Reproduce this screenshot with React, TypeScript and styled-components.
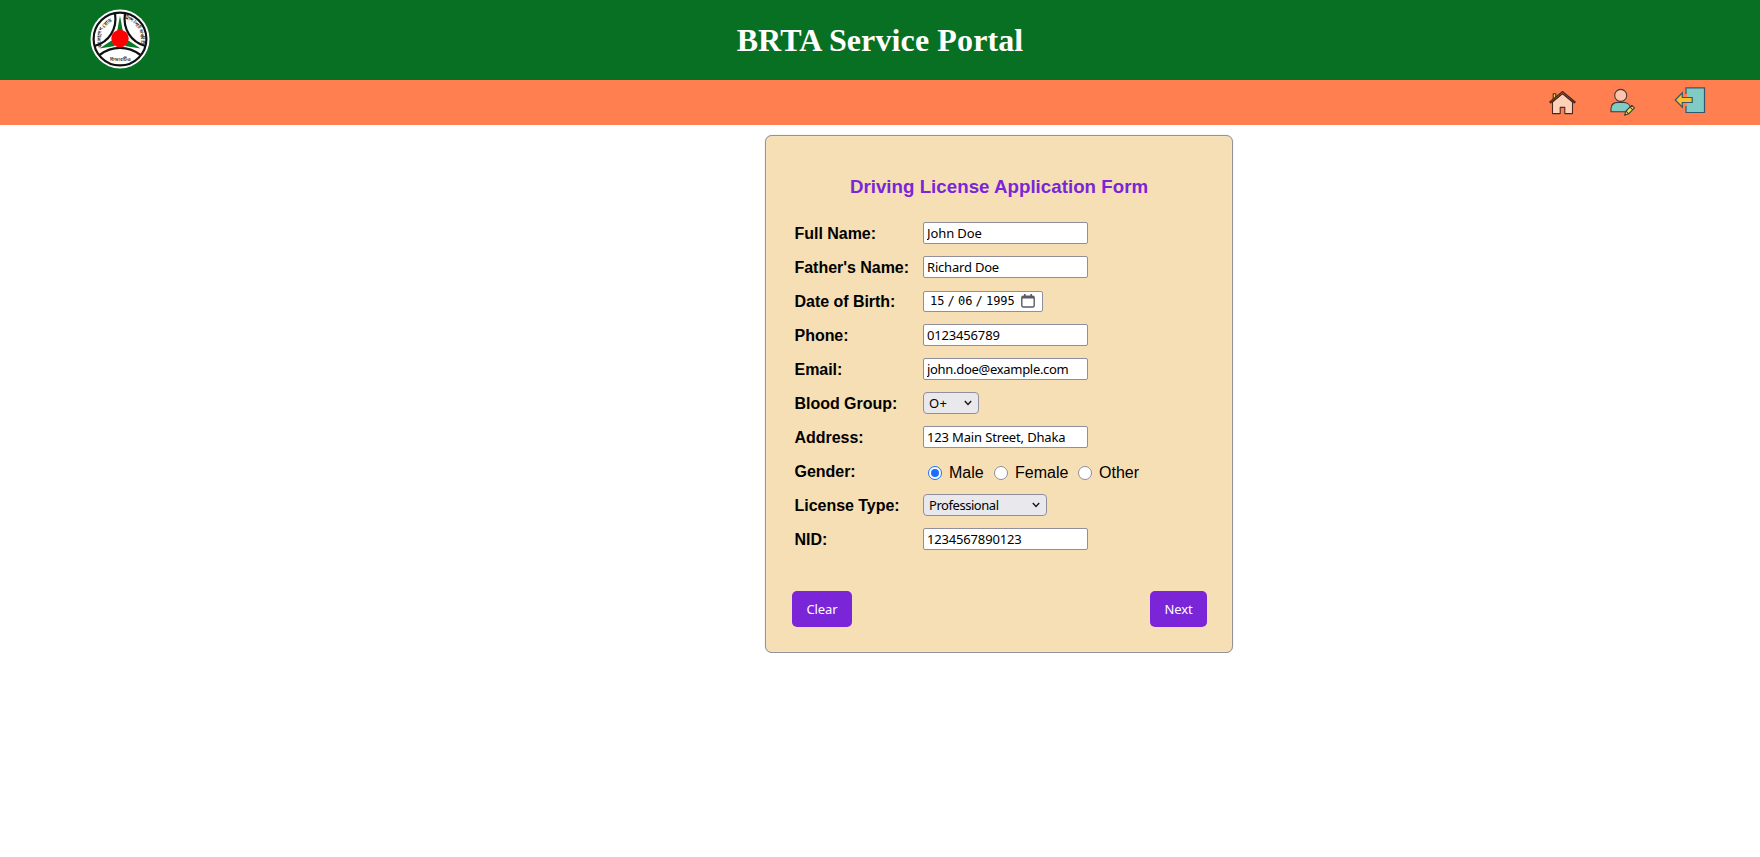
import React from "react";
import styled, { createGlobalStyle } from "styled-components";

const GlobalStyle = createGlobalStyle`
  * { box-sizing: border-box; }
  body { margin: 0; background: #fff; color: #000; font-family: "Liberation Sans", Arial, sans-serif; font-size: 16px; }
`;

const Header = styled.header`
  height: 80px;
  display: grid;
  grid-template-columns: 240px 1fr 240px;
  align-items: center;
  background: #077022;
`;
const LogoLink = styled.a`
  display: flex;
  margin: 0 0 2px 90px;
`;
const PortalTitle = styled.h1`
  margin: 0;
  text-align: center;
  color: #fff;
  font: bold 32px/38px "Liberation Serif", "Times New Roman", serif;
  letter-spacing: 0.12px;
`;
const Nav = styled.nav`
  height: 45px;
  display: flex;
  justify-content: flex-end;
  align-items: flex-start;
  padding: 6px 54px 0 0;
  background: #ff7f50;
`;
const NavLink = styled.a<{ $gap?: number; $top?: number }>`
  display: flex;
  margin-right: ${(p) => p.$gap ?? 0}px;
  padding-top: ${(p) => p.$top ?? 0}px;
`;
const Main = styled.main`
  padding: 10px 0 0 765px;
`;
const Card = styled.form`
  width: 468px;
  height: 518px;
  padding: 40px 25px 0 26px;
  border: 1px solid #929298;
  border-radius: 7px;
  background: #f6dfb5;
  box-shadow: inset 0 0 1px #fff, 0 0 1px #aaa;
`;
const FormTitle = styled.h2`
  margin: 0 1px 19px 0;
  color: #7a25d8;
  font-size: 18.72px;
  line-height: 22px;
  letter-spacing: 0.02px;
  text-align: center;
`;
const Row = styled.div`
  height: 34px;
  display: grid;
  grid-template-columns: 128.5px 1fr;
  align-items: center;
  padding-left: 2.5px;
`;
const Label = styled.label`
  font-weight: bold;
  line-height: 18px;
  letter-spacing: -0.03px;
  white-space: nowrap;
`;
const controlFont = `font-family: "Noto Sans", Tahoma, sans-serif; font-size: 13px;`;
const TextInput = styled.input<{ $spacing: number }>`
  ${controlFont}
  width: 165px;
  height: 22px;
  margin: 0 0 2px;
  padding: 0 3px;
  border: 1px solid #8f8f9d;
  border-radius: 2px;
  background: #fff;
  color: #000;
  letter-spacing: ${(p) => p.$spacing}px;
`;
const DateField = styled.div`
  width: 120px;
  height: 21px;
  display: flex;
  align-items: center;
  margin-bottom: 1px;
  padding: 0 7px 0 6px;
  border: 1px solid #8f8f9d;
  border-radius: 2px;
  background: #fff;
  font: 12px/19px "DejaVu Sans Mono", monospace;
`;
const DatePart = styled.span`
  white-space: nowrap;
`;
const Slash = styled.span`
  width: 13.5px;
  text-align: center;
`;
const CalendarIcon = styled.svg`
  margin-left: auto;
  margin-bottom: 2px;
`;
const SelectBox = styled.div<{ $width: number; $spacing?: number }>`
  ${controlFont}
  width: ${(p) => p.$width}px;
  height: 22px;
  display: flex;
  align-items: center;
  justify-content: space-between;
  margin-bottom: 2px;
  padding: 0 6px 0 5px;
  border: 1px solid #8f8f9d;
  border-radius: 4px;
  background: #e9e9ed;
  line-height: 20px;
  letter-spacing: ${(p) => p.$spacing ?? 0}px;
`;
const RadioGroup = styled.div`
  display: flex;
  align-items: center;
  padding: 2px 0 0 5px;
`;
const RadioLabel = styled.label<{ $width: number }>`
  display: flex;
  align-items: center;
  gap: 7px;
  width: ${(p) => p.$width}px;
  line-height: 18px;
`;
const RadioDot = styled.span<{ $checked?: boolean }>`
  width: 14px;
  height: 14px;
  flex: none;
  display: flex;
  align-items: center;
  justify-content: center;
  border: ${(p) => (p.$checked ? "1.5px solid #1a6dff" : "1px solid #8f8f9d")};
  border-radius: 50%;
  background: #fff;
  &::after {
    content: "";
    width: 8px;
    height: 8px;
    border-radius: 50%;
    background: ${(p) => (p.$checked ? "#1a6dff" : "transparent")};
  }
`;
const Actions = styled.div`
  display: flex;
  justify-content: space-between;
  margin-top: 34px;
`;
const Button = styled.button<{ $width: number }>`
  ${controlFont}
  width: ${(p) => p.$width}px;
  height: 36px;
  padding: 0;
  border: 0;
  border-radius: 5px;
  background: #7a25d8;
  color: #fff;
  letter-spacing: -0.1px;
`;

function Logo() {
  return (
    <svg width="60" height="60" viewBox="0 0 60 60">
      <defs>
        <path id="arcLeft" d="M12.6 38 A19.5 19.5 0 0 1 25 11.2" />
        <path id="arcRight" d="M34.5 9.6 A21 21 0 0 1 49.5 37" />
      </defs>
      <circle cx="30" cy="30" r="29.5" fill="#fff" />
      <circle cx="30" cy="30" r="26.4" fill="#fff" stroke="#111" strokeWidth="2.2" />
      <g fill="none" stroke="#111" strokeWidth="2.2">
        <path d="M25 4.5 C27.5 20 19 33 4.5 37" />
        <path d="M35 4.5 C32.5 20 41 33 55.5 37" />
        <path d="M9.5 46 C22 36.5 38 36.5 50.5 46" />
      </g>
      <g fill="#087a25">
        <path d="M30 6.5 L27.2 22 H32.8 Z" />
        <path d="M9.5 39.5 L21.5 31.5 L25 37 Z" />
        <path d="M50.5 39.5 L38.5 31.5 L35 37 Z" />
      </g>
      <circle cx="30" cy="29.5" r="8.7" fill="#f00" />
      <g fill="#111" fontFamily="Noto Sans, sans-serif" fontWeight="700" fontSize="4.9">
        <text><textPath href="#arcLeft" startOffset="0" textLength="30">বাংলাদেশ রোড</textPath></text>
        <text fontSize="4.6"><textPath href="#arcRight" startOffset="0" textLength="33">ট্রান্সপোর্ট অথরিটি</textPath></text>
        <text x="30" y="51.5" textAnchor="middle">বিআরটিএ</text>
      </g>
    </svg>
  );
}

function HomeIcon() {
  return (
    <svg width="27" height="25" viewBox="0 0 27 25" stroke="#4a2820" strokeWidth="1.1" strokeLinejoin="round">
      <path d="M4.2 9 V2.7 H6.8 V7" fill="#e9d34c" />
      <path d="M3.5 11 L13.5 2.5 L23.5 11 V22.6 H15.8 V16.4 H11.2 V22.6 H3.5 Z" fill="#ffd0b8" />
      <path d="M0.7 11 L13.5 0.5 L26.3 11 L25.4 12 L13.5 2.6 L1.6 12 Z" fill="#e05730" />
    </svg>
  );
}

function UserIcon() {
  return (
    <svg width="26" height="28" viewBox="0 0 26 28" stroke="#403a3a" strokeWidth="1.1" strokeLinejoin="round">
      <circle cx="10.7" cy="7.4" r="6" fill="#ffc4ae" />
      <path d="M1 23.8 V20.5 C1 16.5 4 14.4 8 14.4 H13 C17 14.4 20.3 16.4 20.3 19.9 V23.8 Z" fill="#80cbc4" />
      <path d="M14.6 27.2 L16 23 L21.8 17.4 L24.5 19.9 L18.6 25.8 Z" fill="#e3ea5a" />
      <path d="M20 19.1 L22.7 21.6 M16 23 L18.6 25.8" fill="none" />
    </svg>
  );
}

function ExitIcon() {
  return (
    <svg width="32" height="28" viewBox="0 0 32 28">
      <path d="M12 1.8 H30.5 V26.5 H12 Z" fill="#80cbc4" stroke="#34586b" strokeWidth="1.2" />
      <path d="M11 9.5 H13 M11 18.5 H13" stroke="#ff7f50" strokeWidth="3" />
      <path d="M1.3 14 L8.3 6.8 V11.5 H18.2 V16.5 H8.3 V21.2 Z" fill="#fbc02d" stroke="#34586b" strokeWidth="1.2" />
    </svg>
  );
}

function Chevron() {
  return (
    <svg width="8" height="6" viewBox="0 0 8 6" fill="none" stroke="#15141a" strokeWidth="1.4">
      <path d="M0.8 1 L4 4.4 L7.2 1" />
    </svg>
  );
}

function TextRow(props: { label: string; value: string; spacing: number }) {
  return (
    <Row>
      <Label>{props.label}</Label>
      <TextInput defaultValue={props.value} $spacing={props.spacing} />
    </Row>
  );
}

export default function App() {
  return (
    <>
      <GlobalStyle />
      <Header>
        <LogoLink><Logo /></LogoLink>
        <PortalTitle>BRTA Service Portal</PortalTitle>
      </Header>
      <Nav>
        <NavLink $gap={34} $top={5}><HomeIcon /></NavLink>
        <NavLink $gap={38} $top={2}><UserIcon /></NavLink>
        <NavLink><ExitIcon /></NavLink>
      </Nav>
      <Main>
        <Card>
          <FormTitle>Driving License Application Form</FormTitle>
          <TextRow label="Full Name:" value="John Doe" spacing={-0.1} />
          <TextRow label="Father's Name:" value="Richard Doe" spacing={-0.2} />
          <Row>
            <Label>Date of Birth:</Label>
            <DateField>
              <DatePart>15</DatePart><Slash>/</Slash>
              <DatePart>06</DatePart><Slash>/</Slash>
              <DatePart>1995</DatePart>
              <CalendarIcon width="14" height="14" viewBox="0 0 14 14">
                <rect x="0.8" y="2.2" width="12.4" height="10.8" rx="1.5" fill="none" stroke="#5b5b66" strokeWidth="1.4" />
                <path d="M1 2 H13 V4.6 H1 Z M3 0 H4.6 V3 H3 Z M9.4 0 H11 V3 H9.4 Z" fill="#5b5b66" />
              </CalendarIcon>
            </DateField>
          </Row>
          <TextRow label="Phone:" value="0123456789" spacing={-0.17} />
          <TextRow label="Email:" value="john.doe@example.com" spacing={-0.3} />
          <Row>
            <Label>Blood Group:</Label>
            <SelectBox $width={56} $spacing={0.3}>O+<Chevron /></SelectBox>
          </Row>
          <TextRow label="Address:" value="123 Main Street, Dhaka" spacing={-0.15} />
          <Row>
            <Label>Gender:</Label>
            <RadioGroup>
              <RadioLabel $width={66}><RadioDot $checked />Male</RadioLabel>
              <RadioLabel $width={84}><RadioDot />Female</RadioLabel>
              <RadioLabel $width={70}><RadioDot />Other</RadioLabel>
            </RadioGroup>
          </Row>
          <Row>
            <Label>License Type:</Label>
            <SelectBox $width={124} $spacing={-0.45}>Professional<Chevron /></SelectBox>
          </Row>
          <TextRow label="NID:" value="1234567890123" spacing={-0.17} />
          <Actions>
            <Button type="button" $width={60}>Clear</Button>
            <Button type="button" $width={57}>Next</Button>
          </Actions>
        </Card>
      </Main>
    </>
  );
}
